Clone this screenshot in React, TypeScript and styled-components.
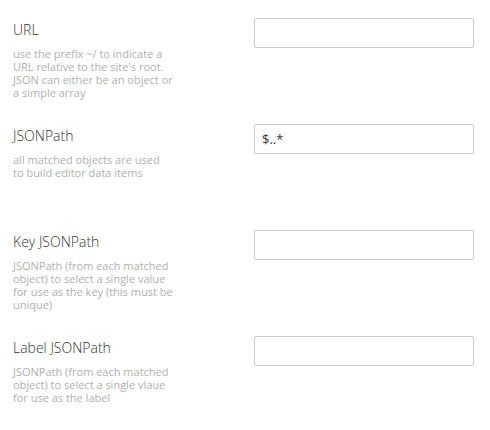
import React from 'react';
import styled, { createGlobalStyle } from 'styled-components';

const GlobalStyle = createGlobalStyle`
  html, body {
    margin: 0;
    padding: 0;
    background: #ffffff;
  }
  body {
    font-family: 'Open Sans', 'Liberation Sans', sans-serif;
  }
`;

interface Field {
  title: string;
  description: string;
  value: string;
}

const fields: Field[] = [
  {
    title: 'URL',
    description:
      "use the prefix ~/ to indicate a URL relative to the site's root. JSON can either be an object or a simple array",
    value: '',
  },
  {
    title: 'JSONPath',
    description: 'all matched objects are used\nto build editor data items',
    value: '$..*',
  },
  {
    title: 'Key JSONPath',
    description:
      'JSONPath (from each matched object) to select a single value for use as the key (this must be unique)',
    value: '',
  },
  {
    title: 'Label JSONPath',
    description: 'JSONPath (from each matched object) to select a single vlaue for use as the label',
    value: '',
  },
];

const App: React.FC = () => {
  return (
    <Page>
      <GlobalStyle />
      {fields.map((f) => (
        <Row key={f.title}>
          <LabelCol>
            <Title>{f.title}</Title>
            <Description>{f.description}</Description>
          </LabelCol>
          <Input type="text" defaultValue={f.value} />
        </Row>
      ))}
    </Page>
  );
};

const Page = styled.div`
  display: flex;
  flex-direction: column;
  padding-left: 13px;
`;

const Row = styled.div`
  display: grid;
  grid-template-columns: 241px 220px;
  align-items: start;
  height: 106px;
  padding-top: 18px;
  box-sizing: border-box;
`;

const LabelCol = styled.div`
  display: flex;
  flex-direction: column;
  padding-top: 3px;
`;

const Title = styled.div`
  font-size: 14px;
  font-weight: 300;
  line-height: 18px;
  color: #333333;
`;

const Description = styled.div`
  margin-top: 8px;
  max-width: 163px;
  white-space: pre-line;
  font-size: 11px;
  line-height: 13px;
  color: #b0b0b0;
`;

const Input = styled.input`
  box-sizing: border-box;
  width: 220px;
  height: 30px;
  margin: 0;
  padding: 0 7px;
  border: 1px solid #cccccc;
  border-radius: 2px;
  background: #ffffff;
  font-family: 'Open Sans', 'Liberation Sans', sans-serif;
  font-size: 13px;
  color: #333333;
  outline: none;
`;

export default App;
